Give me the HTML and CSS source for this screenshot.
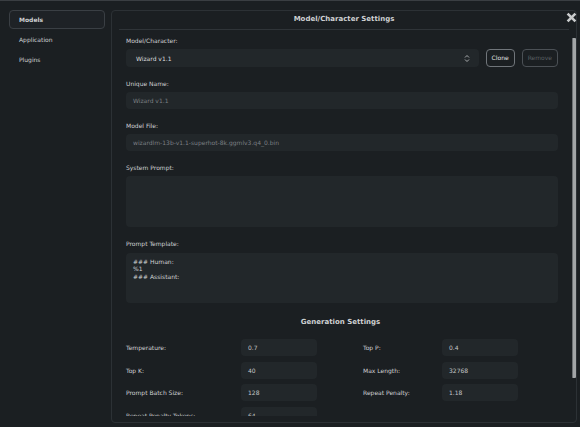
FILE: index.html
```html
<!DOCTYPE html>
<html lang="en">
<head>
    <meta charset="UTF-8">
    <title>Settings</title>
    <link rel="stylesheet" href="styles.css">
</head>
<body>
    <div class="app">
        <nav class="sidebar">
            <div class="nav-item active">Models</div>
            <div class="nav-item">Application</div>
            <div class="nav-item">Plugins</div>
        </nav>

        <section class="panel">
            <div class="panel-title">Model/Character Settings</div>
            <div class="panel-body">
                <div class="field">
                    <div class="label">Model/Character:</div>
                    <div class="select-row">
                        <div class="select">
                            <span>Wizard v1.1</span>
                            <svg width="6" height="9" viewBox="0 0 6 9"><path d="M1 3.5 L3 1.5 L5 3.5 M1 5.5 L3 7.5 L5 5.5" fill="none" stroke="#a9acae" stroke-width="1"/></svg>
                        </div>
                        <button class="btn">Clone</button>
                        <button class="btn disabled">Remove</button>
                    </div>
                </div>
                <div class="field">
                    <div class="label">Unique Name:</div>
                    <div class="input dim">Wizard v1.1</div>
                </div>
                <div class="field">
                    <div class="label">Model File:</div>
                    <div class="input dim file">wizardlm-13b-v1.1-superhot-8k.ggmlv3.q4_0.bin</div>
                </div>
                <div class="field">
                    <div class="label">System Prompt:</div>
                    <div class="textarea"></div>
                </div>
                <div class="field">
                    <div class="label">Prompt Template:</div>
                    <div class="textarea template">### Human:<br>%1<br>### Assistant:</div>
                </div>

                <div class="section-title">Generation Settings</div>
                <div class="gen-grid">
                    <div class="gen-label">Temperature:</div><div class="gen-input">0.7</div>
                    <div class="gen-label right">Top P:</div><div class="gen-input">0.4</div>
                    <div class="gen-label">Top K:</div><div class="gen-input">40</div>
                    <div class="gen-label right">Max Length:</div><div class="gen-input">32768</div>
                    <div class="gen-label">Prompt Batch Size:</div><div class="gen-input">128</div>
                    <div class="gen-label right">Repeat Penalty:</div><div class="gen-input">1.18</div>
                    <div class="gen-label">Repeat Penalty Tokens:</div><div class="gen-input">64</div>
                </div>
            </div>
            <div class="scrollbar"></div>
        </section>

        <button class="close">
            <svg width="11" height="11" viewBox="0 0 11 11"><path d="M1.6 1.6 L9.4 9.4 M9.4 1.6 L1.6 9.4" stroke="#c9cbcc" stroke-width="2.6"/></svg>
        </button>
    </div>
</body>
</html>
```

FILE: styles.css
```css
html, body {
    margin: 0;
    padding: 0;
}
body {
    background-color: #1b1f22;
    font-family: "DejaVu Sans", sans-serif;
    font-size: 6px;
    color: #cfd1d2;
    width: 580px;
    height: 427px;
    overflow: hidden;
}
.app {
    position: relative;
    display: flex;
    gap: 6px;
    height: 427px;
    box-sizing: border-box;
    border-top: 1px solid #3a3e42;
    padding: 9px 3px 4px 9px;
}
.sidebar {
    width: 96px;
    display: flex;
    flex-direction: column;
    gap: 1px;
}
.nav-item {
    height: 19px;
    line-height: 19px;
    padding-left: 10px;
    box-sizing: border-box;
    color: #cfd1d2;
}
.nav-item.active {
    font-weight: bold;
    border: 1px solid #3a3f44;
    border-radius: 4px;
    background-color: #1e2226;
    padding-left: 9px;
    line-height: 17px;
}
.panel {
    position: relative;
    flex: 1;
    display: flex;
    flex-direction: column;
    border: 1px solid #2c3135;
    border-radius: 4px;
}
.panel-title {
    margin: 0 7px;
    height: 18px;
    line-height: 17px;
    text-align: center;
    font-weight: bold;
    font-size: 7px;
    border-bottom: 1px solid #2f3438;
}
.panel-body {
    flex: 1;
    overflow: hidden;
    padding: 6px 18px 0 14px;
    margin-bottom: 6px;
}
.field {
    margin-bottom: 12px;
}
.label {
    height: 9px;
    line-height: 9px;
    margin-bottom: 4px;
}
.field:nth-child(5) .label {
    margin-bottom: 5px;
}
.select-row {
    display: flex;
    align-items: center;
    gap: 7px;
    height: 18px;
}
.select {
    flex: 1;
    height: 18px;
    display: flex;
    align-items: center;
    justify-content: space-between;
    padding: 0 9px 0 10px;
    background-color: #22272a;
    border-radius: 4px;
    color: #dcdedf;
}
.btn {
    height: 18px;
    box-sizing: border-box;
    padding: 0 5px;
    font-family: "DejaVu Sans", sans-serif;
    font-size: 6px;
    line-height: 16px;
    background-color: #1b1f22;
    color: #e2e3e4;
    border: 1px solid #70757a;
    border-radius: 4px;
}
.btn.disabled {
    color: #5a5f63;
    border-color: #4b5055;
}
.input {
    height: 17px;
    line-height: 17px;
    padding: 0 7px;
    background-color: #22272a;
    border-radius: 4px;
}
.input.dim {
    color: #7b7f83;
}
.textarea {
    height: 51px;
    background-color: #22272a;
    border-radius: 4px;
    box-sizing: border-box;
}
.textarea.template {
    height: 50px;
    padding: 5px 7px;
    line-height: 7.3px;
    color: #d0d2d3;
}
.section-title {
    text-align: center;
    font-weight: bold;
    font-size: 7px;
    height: 10px;
    line-height: 10px;
    margin-top: 14px;
    padding-right: 3px;
}
.gen-grid {
    display: grid;
    grid-template-columns: 115px 76px 125px 76px;
    grid-auto-rows: 17px;
    row-gap: 5.5px;
    margin-top: 12px;
    align-items: center;
}
.gen-label.right {
    padding-left: 46px;
}
.gen-input {
    height: 17px;
    line-height: 17px;
    padding-left: 7px;
    background-color: #22272a;
    border-radius: 4px;
    color: #c4c6c8;
}
.scrollbar {
    position: absolute;
    right: 0;
    top: 27px;
    width: 3px;
    height: 340px;
    background-color: #a2a5a7;
    border-left: 1px solid #6d7174;
    border-radius: 1px;
}
.close {
    position: absolute;
    top: 10px;
    right: 3px;
    padding: 0;
    border: none;
    background: none;
    width: 11px;
    height: 11px;
}
```
